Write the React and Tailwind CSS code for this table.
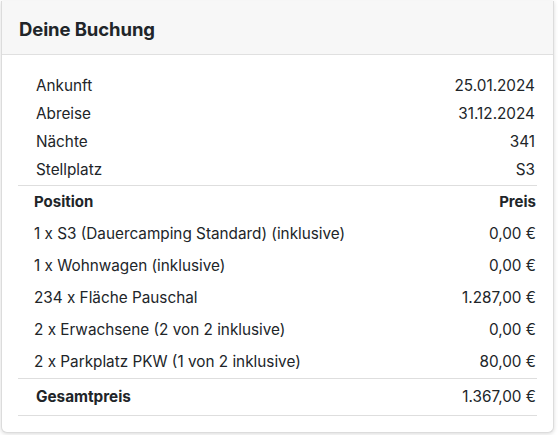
const stay = [
  ['Ankunft', '25.01.2024'],
  ['Abreise', '31.12.2024'],
  ['Nächte', '341'],
  ['Stellplatz', 'S3'],
]

const items = [
  ['1 x S3 (Dauercamping Standard) (inklusive)', '0,00 €'],
  ['1 x Wohnwagen (inklusive)', '0,00 €'],
  ['234 x Fläche Pauschal', '1.287,00 €'],
  ['2 x Erwachsene (2 von 2 inklusive)', '0,00 €'],
  ['2 x Parkplatz PKW (1 von 2 inklusive)', '80,00 €'],
]

export default function App() {
  return (
    <div
      className="w-[559px] h-[435px] bg-white p-[1px] text-[#212529]"
      style={{ fontFamily: 'Inter, "Noto Sans", sans-serif' }}
    >
      <div className="w-[553px] h-[432px] bg-white rounded-b-[6px] border border-t-0 border-[#dcdcdc] shadow-[0_1px_4px_rgba(0,0,0,0.15)] overflow-hidden">
        <div className="h-[54px] bg-[#f7f7f7] border-b border-[#e0e0e0] px-[17px] pt-[4px] flex items-center">
          <h2 className="text-[18.5px] font-bold leading-none tracking-[-0.1px]">Deine Buchung</h2>
        </div>
        <div className="px-[16px] pt-[17px]">
          <div className="pl-[18px] pr-[2px] pb-[1px] border-b border-[#dedede]">
            {stay.map(([k, v]) => (
              <div key={k} className="h-[28px] flex items-center justify-between text-[15.3px]">
                <span>{k}</span>
                <span>{v}</span>
              </div>
            ))}
          </div>
          <div className="pl-[16px] pr-[1px] border-b border-[#dedede]">
            <div className="h-[32px] flex items-center justify-between text-[15px] font-bold">
              <span>Position</span>
              <span>Preis</span>
            </div>
            {items.map(([k, v]) => (
              <div key={k} className="h-[32px] flex items-center justify-between text-[15.3px]">
                <span>{k}</span>
                <span>{v}</span>
              </div>
            ))}
          </div>
          <div className="h-[37px] pl-[18px] pr-[1px] flex items-center justify-between border-b border-[#dedede] text-[15.3px]">
            <span className="font-bold">Gesamtpreis</span>
            <span>1.367,00 €</span>
          </div>
        </div>
      </div>
    </div>
  )
}
